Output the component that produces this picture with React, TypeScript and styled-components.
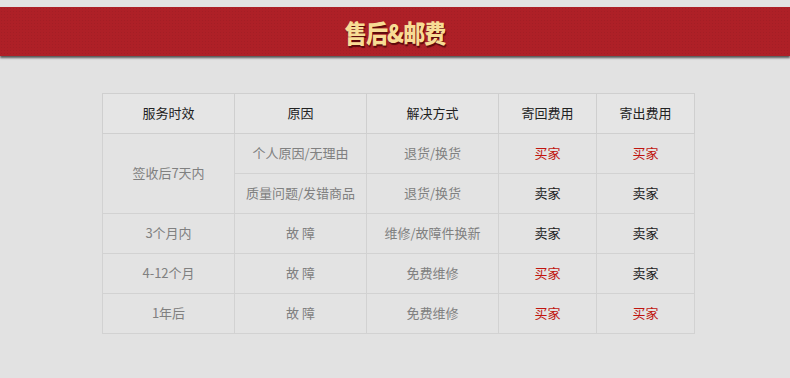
import React from "react";
import styled, { createGlobalStyle } from "styled-components";

const GlobalStyle = createGlobalStyle`
  body {
    margin: 0;
    background: #e2e2e2;
    font-family: "Microsoft YaHei", "Noto Sans CJK SC", sans-serif;
  }
`;

const Page = styled.div`
  width: 790px;
  height: 378px;
  padding-top: 7px;
  box-sizing: border-box;
  background: #e2e2e2;
  overflow: hidden;
`;

const Banner = styled.header`
  height: 49px;
  background: #ae2027;
  background-image: radial-gradient(rgba(0, 0, 0, 0.06) 1px, transparent 1px);
  background-size: 3px 3px;
  box-shadow: 0 2px 2px rgba(40, 40, 40, 0.75);
  display: flex;
  align-items: center;
  justify-content: center;
`;

const Title = styled.h1`
  margin: 0;
  font-family: "Noto Sans CJK SC", sans-serif;
  font-weight: 900;
  font-size: 25px;
  letter-spacing: -1px;
  color: #f7dc95;
  text-shadow: 1px 2px 1px rgba(60, 0, 0, 0.7);
  transform: scaleX(0.88);
`;

const Table = styled.table`
  margin: 37px 0 0 102px;
  border-collapse: collapse;
  table-layout: fixed;
  font-size: 13px;
  text-align: center;
`;

const Head = styled.th<{ $w: number }>`
  width: ${(p) => p.$w - 1}px;
  height: 36px;
  padding: 0 0 3px;
  border: 1px solid #cfcfcf;
  background: #e5e5e5;
  font-weight: normal;
  color: #222;
`;

const Cell = styled.td<{ $tone?: "gray" | "red" | "dark" }>`
  height: 36px;
  padding: 0 0 3px;
  border: 1px solid #d2d2d2;
  background: #e3e3e3;
  color: ${(p) =>
    p.$tone === "red" ? "#c0150f" : p.$tone === "dark" ? "#222" : "#808080"};
`;

const heads: [string, number][] = [
  ["服务时效", 132],
  ["原因", 132],
  ["解决方式", 132],
  ["寄回费用", 98],
  ["寄出费用", 98],
];

const buyer = "买家";
const seller = "卖家";
const tone = (v: string) => (v === buyer ? "red" : "dark");

export default function App() {
  return (
    <Page>
      <GlobalStyle />
      <Banner>
        <Title>售后&amp;邮费</Title>
      </Banner>
      <Table>
        <thead>
          <tr>
            {heads.map(([t, w]) => (
              <Head key={t} $w={w}>
                {t}
              </Head>
            ))}
          </tr>
        </thead>
        <tbody>
          <tr>
            <Cell rowSpan={2}>签收后7天内</Cell>
            <Cell>个人原因/无理由</Cell>
            <Cell>退货/换货</Cell>
            <Cell $tone={tone(buyer)}>{buyer}</Cell>
            <Cell $tone={tone(buyer)}>{buyer}</Cell>
          </tr>
          <tr>
            <Cell>质量问题/发错商品</Cell>
            <Cell>退货/换货</Cell>
            <Cell $tone={tone(seller)}>{seller}</Cell>
            <Cell $tone={tone(seller)}>{seller}</Cell>
          </tr>
          <tr>
            <Cell>3个月内</Cell>
            <Cell>故 障</Cell>
            <Cell>维修/故障件换新</Cell>
            <Cell $tone={tone(seller)}>{seller}</Cell>
            <Cell $tone={tone(seller)}>{seller}</Cell>
          </tr>
          <tr>
            <Cell>4-12个月</Cell>
            <Cell>故 障</Cell>
            <Cell>免费维修</Cell>
            <Cell $tone={tone(buyer)}>{buyer}</Cell>
            <Cell $tone={tone(seller)}>{seller}</Cell>
          </tr>
          <tr>
            <Cell>1年后</Cell>
            <Cell>故 障</Cell>
            <Cell>免费维修</Cell>
            <Cell $tone={tone(buyer)}>{buyer}</Cell>
            <Cell $tone={tone(buyer)}>{buyer}</Cell>
          </tr>
        </tbody>
      </Table>
    </Page>
  );
}
